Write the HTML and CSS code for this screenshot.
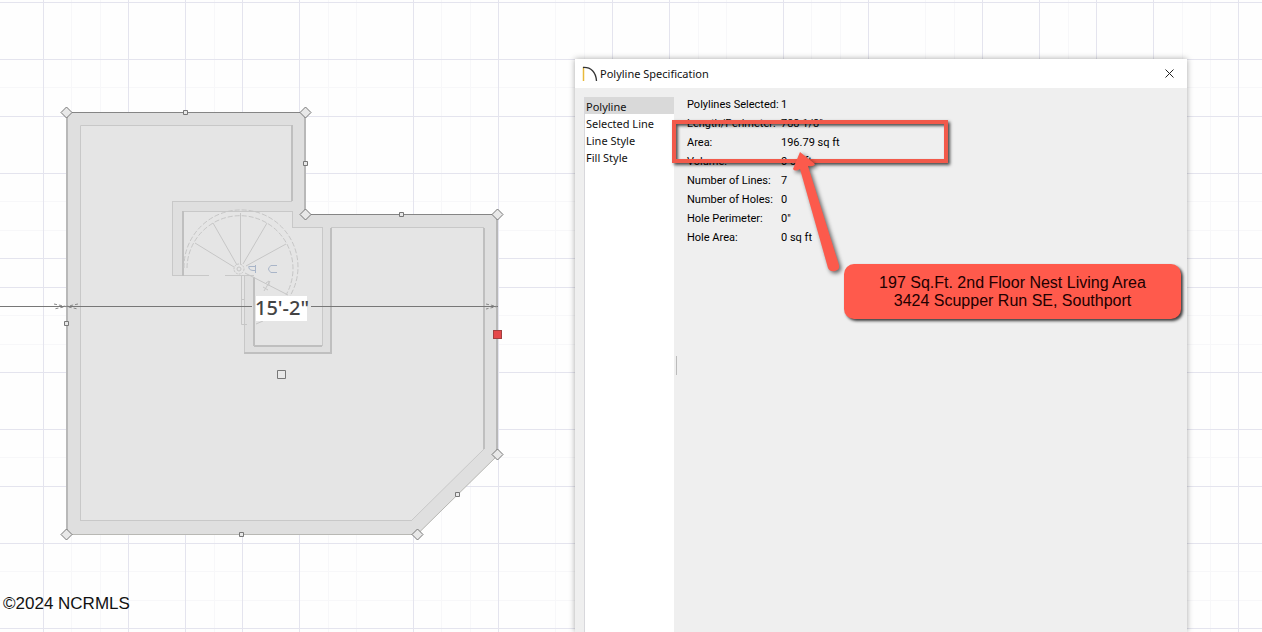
FILE: index.html
```html
<!DOCTYPE html>
<html lang="en">
<head>
<meta charset="utf-8">
<title>Polyline Specification</title>
<link rel="stylesheet" href="styles.css">
</head>
<body>
<main class="workspace">
  <svg class="plan" aria-label="Floor plan">
    <g id="minor" class="grid-minor"></g>
    <g id="major" class="grid-major"></g>
    <path class="wall" d="M67 113H306V215H498V455L417 535H67Z"/>
    <path class="floor" d="M80 125H292V201H173V276H184V211H292V227H322V346H254V276H244V354H331V227H484V449L412 520H80Z"/>
    <path class="floor" d="M184 211H292V227H322V346H254V276H184Z"/>
    <path class="edge-soft" d="M80.500 520V125.500H292M173 201.500H292M184 211.500H292M172.500 276V201M173 275.500H209M225 275.500H254M244.500 276V354M292 227.500H323M331 227.500H484M322.500 228V346M484 449L412 520M292.500 211V227"/>
    <path class="edge" d="M292 125V201M183 211V276M254 277V346M254 346H322M244 353H331V228M484 228V449"/>
    <path class="edge-soft" d="M80 520.500H412"/>
    <path class="outline-side" d="M67 113V535M305 113V215M497 215V455"/>
    <path class="outline" d="M67 112.500H306M306 214.500H498"/>
    <path class="outline-low" d="M67 534.500H417L498 455"/>
    <g class="stairs">
      <path stroke-dasharray="5 2" d="M184 268A57 57 0 1 1 290 296M187 268A53 53 0 1 1 286 295"/>
      <path d="M240.500 264V213M237 265L213 223M234 267L195 243M243 264L267 223M246 266L286 244M245 273L288 295"/>
      <circle cx="239" cy="269" r="5" stroke-dasharray="2 1"/>
      <circle cx="239" cy="269" r="2"/>
      <path d="M241.500 276V324.500H247M241 299.500H244M256 324L263 321M264 291L270 281M266 283L269 281L269 286M263 287L268 290"/>
      <path class="up" d="M255.500 265V273M249 266.500H256M249 266Q248 270 253 270.500H256M277 265.500H271Q266 269 271 272.500H277"/>
    </g>
    <path class="dimension" d="M0 306.500H252M311 306.500H498"/>
    <path class="ticks" d="M54 304L66 306.500L54 309M78 304L66 306.500L78 309M486 304L497 306.500L486 309"/>
    <rect class="label-box" x="256" y="296" width="51" height="25"/>
    <text class="label" x="282" y="315">15'-2"</text>
    <g class="handles">
      <path d="M66.500 107L72 112.500L66.500 118L61 112.500ZM305.500 107L311 112.500L305.500 118L300 112.500ZM305.500 209L311 214.500L305.500 220L300 214.500ZM497.500 209L503 214.500L497.500 220L492 214.500ZM497.500 449L503 454.500L497.500 460L492 454.500ZM417.500 529L423 534.500L417.500 540L412 534.500ZM66.500 529L72 534.500L66.500 540L61 534.500Z"/>
      <path d="M183.500 110.500h4v4h-4zM303.500 161.500h4v4h-4zM399.500 212.500h4v4h-4zM455.500 492.500h4v4h-4zM239.500 532.500h4v4h-4zM64.500 321.500h4v4h-4zM277.500 370.500h8v8h-8z"/>
      <rect class="active" x="493.500" y="330.500" width="8" height="8"/>
    </g>
  </svg>

  <p class="watermark">©2024 NCRMLS</p>

  <section class="dialog" role="dialog" aria-labelledby="dialog-title">
    <header class="titlebar">
      <svg class="logo" width="16" height="16" viewBox="0 0 16 16" aria-hidden="true">
        <path d="M1.500 1V15" stroke="#e8b93a" stroke-width="1.500"/>
        <path d="M1 1.500C9 1 14 6 14.500 15" stroke="#333" fill="none" stroke-width="1.300"/>
      </svg>
      <h1 id="dialog-title">Polyline Specification</h1>
      <button class="close" type="button" aria-label="Close">
        <svg width="9" height="9" viewBox="0 0 9 9"><path d="M0.500 0.500L8.500 8.500M8.500 0.500L0.500 8.500" stroke="#222"/></svg>
      </button>
    </header>
    <div class="content">
      <nav class="pages">
        <button class="page selected" type="button">Polyline</button>
        <button class="page" type="button">Selected Line</button>
        <button class="page" type="button">Line Style</button>
        <button class="page" type="button">Fill Style</button>
      </nav>
      <div class="splitter"></div>
      <table class="facts">
        <tbody>
        <tr><th scope="row">Polylines Selected:</th><td>1</td></tr>
        <tr><th scope="row">Length/Perimeter:</th><td>788 1/8"</td></tr>
        <tr><th scope="row">Area:</th><td>196.79 sq ft</td></tr>
        <tr><th scope="row">Volume:</th><td>0 cu ft</td></tr>
        <tr><th scope="row">Number of Lines:</th><td>7</td></tr>
        <tr><th scope="row">Number of Holes:</th><td>0</td></tr>
        <tr><th scope="row">Hole Perimeter:</th><td>0"</td></tr>
        <tr><th scope="row">Hole Area:</th><td>0 sq ft</td></tr>
        </tbody>
      </table>
    </div>
    <div class="frame"></div>
    <svg class="arrow" width="60" height="130" viewBox="0 0 60 130" aria-hidden="true">
      <path d="M13 1L28 13Q27 16 21 15L52 114Q53 119 48 120Q43 121 41 117L13 18Q8 21 6 18Z"/>
    </svg>
    <p class="callout">197 Sq.Ft. 2nd Floor Nest Living Area<br>3424 Scupper Run SE, Southport</p>
  </section>
</main>
<script src="grid.js"></script>
</body>
</html>
```
FILE: styles.css
```css
* { box-sizing: border-box; }
body { margin: 0; background: #fefefe; color: #111; font-family: "Liberation Sans", sans-serif; }
.workspace { position: relative; min-height: 100vh; overflow: hidden; }
.plan { position: absolute; inset: 0; width: 100%; height: 100%; fill: none; }
.grid-minor { stroke: #f7f7f9; }
.grid-major { stroke: #e4e4ee; }
.wall { fill: #dfdfdf; }
.floor { fill: #e5e5e5; }
.edge { stroke: #bfbfbf; stroke-width: 2; }
.edge-soft { stroke: #c8c8c8; }
.outline-side { stroke: #b8b8b8; stroke-width: 2; }
.outline { stroke: #858585; }
.outline-low { stroke: #b8b8b4; }
.stairs { stroke: #c6c6c6; }
.up { stroke: #a9b5c8; }
.dimension { stroke: #777; }
.ticks { stroke: #888; stroke-dasharray: 3 2; }
.label-box { fill: #fff; }
.label { fill: #444; stroke: none; font: 500 20px "Noto Sans", sans-serif; text-anchor: middle; }
.handles { fill: #e8e8e8; stroke: #777; }
.active { fill: #e5484a; stroke: #a04040; }
.watermark { position: absolute; left: 3px; bottom: 18px; margin: 0; font-size: 17px; line-height: 20px; color: #111; }

.dialog { position: absolute; left: 575px; top: 59px; bottom: 0; width: 612px; display: flex; flex-direction: column; background: #efefef; box-shadow: 0 0 6px rgba(0, 0, 0, .35); font-family: "Noto Sans", sans-serif; }
.titlebar { display: flex; align-items: center; height: 29px; padding: 0 13px 0 7px; background: #fff; }
.titlebar h1 { flex: 1; margin: 0 0 0 2px; font: 11px/20px "Noto Sans", sans-serif; }
.close { display: flex; padding: 0; border: 0; background: none; }
.content { flex: 1; display: flex; padding: 9px 9px 0; }
.pages { width: 90px; display: flex; flex-direction: column; background: #fff; border-left: 1px solid #d8d8dc; }
.page { height: 17px; padding: 1px 1px 0; border: 0; background: none; text-align: left; font: 11px/17px "Noto Sans", sans-serif; color: #111; }
.page.selected { background: #d9d9d9; }
.splitter { width: 1px; height: 19px; margin: 259px 10px 0 2px; background: #bbb; }
.facts { align-self: flex-start; margin-top: -2px; border-collapse: collapse; color: #000; font-family: Roboto, sans-serif; font-size: 11px; line-height: 19px; white-space: nowrap; }
.facts th { width: 94px; padding: 0; font-weight: normal; text-align: left; }
.facts td { padding: 0; }
.frame { position: absolute; left: 97px; top: 61px; width: 276px; height: 43px; border: 4px solid #f25a4b; box-shadow: 2px 2px 3px rgba(0, 0, 0, .7), inset 2px 2px 3px rgba(0, 0, 0, .65); }
.arrow { position: absolute; left: 212px; top: 92px; fill: #fc5a4c; filter: drop-shadow(2px 2px 2px rgba(0, 0, 0, .6)); }
.callout { position: absolute; left: 269px; top: 205px; width: 337px; margin: 0; padding: 10px 0 9px; border-radius: 10px; background: #ff5a4c; box-shadow: 2px 2px 3px rgba(0, 0, 0, .75); color: #200; font: 16px/18px "Liberation Sans", sans-serif; text-align: center; }
```
FILE: grid.js
```js
const lines = {
  major: {
    x: [43, 128, 185, 242, 299, 413, 498, 612, 669, 783, 868, 982, 1039, 1096, 1153, 1238],
    y: [2, 59, 116, 173, 258, 287, 372, 429, 486, 543, 628]
  },
  minor: {
    x: [71, 100, 214, 328, 356, 441, 470, 555, 584, 698, 726, 811, 840, 925, 954, 1068, 1182, 1210],
    y: [87, 201, 230, 315, 344, 457, 571, 600]
  }
};
for (const [kind, axes] of Object.entries(lines)) {
  const group = document.getElementById(kind);
  for (const [axis, values] of Object.entries(axes)) {
    for (const value of values) {
      const line = document.createElementNS("http://www.w3.org/2000/svg", "line");
      const other = axis === "x" ? "y" : "x";
      line.setAttribute(axis + "1", value + 0.5);
      line.setAttribute(axis + "2", value + 0.5);
      line.setAttribute(other + "1", "0");
      line.setAttribute(other + "2", "100%");
      group.appendChild(line);
    }
  }
}
```
